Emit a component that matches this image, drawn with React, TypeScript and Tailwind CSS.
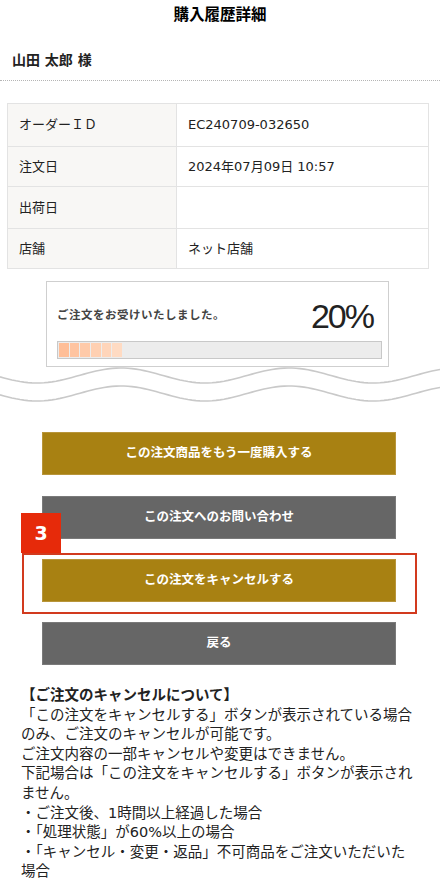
import React from 'react'

const rows = [
  { label: 'オーダーＩＤ', value: 'EC240709-032650', h: 'h-[43px]' },
  { label: '注文日', value: '2024年07月09日 10:57', h: 'h-[40px]' },
  { label: '出荷日', value: '', h: 'h-[42px]' },
  { label: '店舗', value: 'ネット店舗', h: 'h-[40px]' },
]

const segments = ['#ffbe97', '#ffc4a0', '#ffcaa9', '#ffd0b2', '#ffd5ba', '#ffdbc3']

const notes = [
  '「この注文をキャンセルする」ボタンが表示されている場合',
  'のみ、ご注文のキャンセルが可能です。',
  'ご注文内容の一部キャンセルや変更はできません。',
  '下記場合は「この注文をキャンセルする」ボタンが表示され',
  'ません。',
  '・ご注文後、1時間以上経過した場合',
  '・「処理状態」が60%以上の場合',
  '・「キャンセル・変更・返品」不可商品をご注文いただいた',
  '場合',
]

function wavePath(center: number) {
  const pts: string[] = []
  for (let x = 0; x <= 440; x += 4) {
    const y = center + 7.5 * Math.cos((2 * Math.PI * (x - 37)) / 168)
    pts.push(`${x === 0 ? 'M' : 'L'}${x} ${y.toFixed(2)}`)
  }
  return pts.join(' ')
}

function Wave() {
  return (
    <svg width="440" height="38" viewBox="0 0 440 38" className="block">
      <path d={wavePath(8.5)} fill="none" stroke="#c9c9c9" strokeWidth="1.6" />
      <path d={wavePath(26.5)} fill="none" stroke="#c9c9c9" strokeWidth="1.6" />
    </svg>
  )
}

function ActionButton({ label, tone }: { label: string; tone: 'gold' | 'gray' }) {
  return (
    <button
      type="button"
      className={`flex h-[43px] w-[354px] items-center justify-center border text-[12.5px] font-semibold text-white ${
        tone === 'gold' ? 'border-[#b8953a] bg-[#a88112]' : 'border-[#7a7a7a] bg-[#666666]'
      }`}
    >
      {label}
    </button>
  )
}

export default function App() {
  return (
    <div
      className="min-h-[896px] w-[440px] bg-white pb-6 text-[#222]"
      style={{ fontFamily: '"DejaVu Sans", "Noto Sans CJK JP", sans-serif' }}
    >
      <div className="flex h-[32px] items-center justify-center text-[15.5px] font-bold text-black">購入履歴詳細</div>

      <div className="border-b border-dotted border-[#b5b5b5] px-3 pt-[20px] pb-[12px] text-[14px] leading-[16px] font-bold">
        山田 太郎 様
      </div>

      <table className="mx-[7px] mt-[22px] w-[422px] border-collapse text-[13px]">
        <tbody>
          {rows.map((row) => (
            <tr key={row.label} className={row.h}>
              <td className="w-[169px] border border-[#e3e3e3] bg-[#f8f7f5] pl-[11px]">{row.label}</td>
              <td className="border border-[#e3e3e3] pl-[11px]">{row.value}</td>
            </tr>
          ))}
        </tbody>
      </table>

      <div className="mt-[12px] ml-[46px] w-[343px] border border-[#cfcfcf] px-[10px] pt-[14px] pb-[7px]">
        <div className="flex h-[40px] items-center justify-between pr-[5px]">
          <span className="text-[11.5px] font-bold tracking-[0.5px] text-[#444]">ご注文をお受けいたしました。</span>
          <span
            className="text-[34px] leading-none font-light tracking-[-2px] text-[#222]"
            style={{ fontFamily: '"Liberation Sans", Arial, sans-serif' }}
          >
            20%
          </span>
        </div>
        <div className="mt-[5px] flex h-[18px] w-[325px] gap-px border border-[#c8c8c8] bg-[#ececec] p-px">
          {segments.map((c) => (
            <div key={c} className="h-full w-[9.7px]" style={{ backgroundColor: c }} />
          ))}
        </div>
      </div>

      <Wave />

      <div className="mt-[27px] flex flex-col gap-[20px] pl-[42px]">
        <ActionButton label="この注文商品をもう一度購入する" tone="gold" />
        <div className="mt-px">
          <ActionButton label="この注文へのお問い合わせ" tone="gray" />
        </div>
        <div className="relative">
          <ActionButton label="この注文をキャンセルする" tone="gold" />
          <div className="pointer-events-none absolute top-[-6px] left-[-20px] h-[61px] w-[395px] border-2 border-[#d23a1e]" />
          <div className="absolute top-[-46px] left-[-21px] flex h-[40px] w-[40px] items-center justify-center bg-[#e62a0a] text-[19px] font-bold text-white">
            3
          </div>
        </div>
        <ActionButton label="戻る" tone="gray" />
      </div>

      <div className="mt-[21px] pl-[21px] text-[14.5px] leading-[19.6px] whitespace-nowrap text-[#222]">
        <div className="font-bold">【ご注文のキャンセルについて】</div>
        {notes.map((line) => (
          <div key={line}>{line}</div>
        ))}
      </div>
    </div>
  )
}
